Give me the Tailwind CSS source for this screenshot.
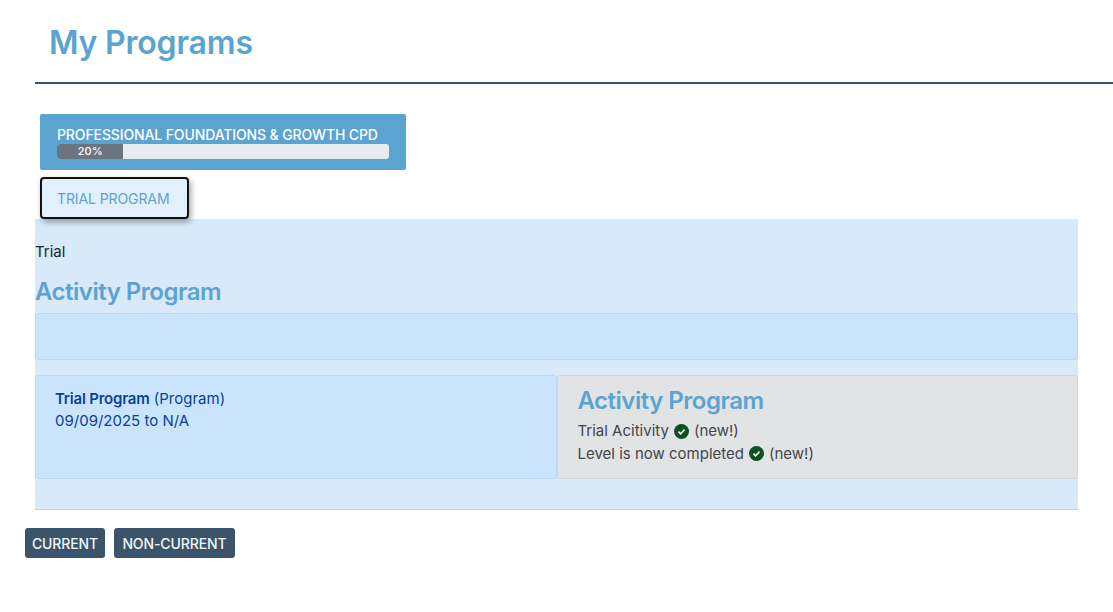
<!DOCTYPE html>
<html lang="en">
<head>
  <meta charset="UTF-8" />
  <title>My Programs</title>
  <script src="https://cdn.jsdelivr.net/npm/@tailwindcss/browser@4"></script>
</head>
<body class="bg-white font-['Inter',sans-serif] text-[15px] h-[612px] overflow-hidden">
  <!-- Header -->
  <div class="ml-[35px]">
    <h1 class="h-[82px] pl-[14px] pt-[21px] text-[32px] leading-[44px] font-semibold tracking-[-0.2px] text-[#5ba3d0]">My Programs</h1>
    <div class="h-[2px] bg-[#3a556b]"></div>
  </div>

  <!-- Program tabs -->
  <div class="ml-[40px] mt-[30px] w-[366px] h-[56px] bg-[#5ba3d0] rounded-[2px] px-[17px] pt-[11px]">
    <div class="text-[14px] leading-[19px] font-medium text-white whitespace-nowrap tracking-[-0.12px]">PROFESSIONAL FOUNDATIONS &amp; GROWTH CPD</div>
    <div class="h-[15px] bg-[#e9ecef] rounded-[3px] overflow-hidden">
      <div class="w-[20%] h-full bg-[#6c757d] text-white text-[11px] leading-[15px] font-medium text-center">20%</div>
    </div>
  </div>
  <div class="ml-[40px] mt-[7px] w-[149px] h-[42px] bg-[#e2f0fd] border-2 border-[#111] rounded-[4px] shadow-[2px_3px_6px_rgba(0,0,0,0.35)] flex items-center pl-[15px] text-[14px] text-[#5ba3d0] whitespace-nowrap relative z-10 tracking-[-0.1px]">TRIAL PROGRAM</div>

  <!-- Panel -->
  <div class="ml-[35px] w-[1043px] h-[291px] bg-[#d8e9fa] border-b border-[#c3d0df] text-[#212529]">
    <div class="pt-[23px] leading-[20px]">Trial</div>
    <h2 class="mt-[15px] text-[24px] leading-[30px] font-semibold tracking-[-0.5px] text-[#5ba3d0]">Activity Program</h2>
    <div class="mt-[6px] h-[47px] bg-[#cae4fe] border border-[#b8d9fb] rounded-[3px]"></div>
    <div class="mt-[15px] grid grid-cols-2 h-[104px]">
      <div class="bg-[#cae4fe] border border-[#b8d9fb] rounded-[3px] pl-[19px] pt-[12px] leading-[22px] text-[#084298]">
        <div><b class="font-semibold tracking-[-0.2px]">Trial Program</b> (Program)</div>
        <div>09/09/2025 to N/A</div>
      </div>
      <div class="bg-[#e2e3e5] border border-[#d3d6d8] rounded-[3px] pl-[20px] pt-[9px] leading-[22.5px] text-[#41464b]">
        <h3 class="text-[24px] leading-[32px] font-semibold tracking-[-0.5px] text-[#5ba3d0] mb-[3px]">Activity Program</h3>
        <div class="flex items-center gap-[5px]">Trial Acitivity
          <svg class="w-[15px] h-[15px]" viewBox="0 0 16 16"><circle cx="8" cy="8" r="8" fill="#0f5120"/><path d="M4.8 8.2l2.2 2.2 4.2-4.4" fill="none" stroke="#fff" stroke-width="1.7"/></svg>
          (new!)</div>
        <div class="flex items-center gap-[5px]">Level is now completed
          <svg class="w-[15px] h-[15px]" viewBox="0 0 16 16"><circle cx="8" cy="8" r="8" fill="#0f5120"/><path d="M4.8 8.2l2.2 2.2 4.2-4.4" fill="none" stroke="#fff" stroke-width="1.7"/></svg>
          (new!)</div>
      </div>
    </div>
  </div>

  <!-- Filters -->
  <div class="ml-[25px] mt-[18px] flex gap-[9px]">
    <button class="w-[80px] h-[30px] bg-[#3a556b] rounded-[3px] text-[14px] font-medium text-[#f2f5f7] tracking-[-0.1px]">CURRENT</button>
    <button class="w-[121px] h-[30px] bg-[#3a556b] rounded-[3px] text-[14px] font-medium text-[#f2f5f7] tracking-[-0.1px]">NON-CURRENT</button>
  </div>
</body>
</html>
